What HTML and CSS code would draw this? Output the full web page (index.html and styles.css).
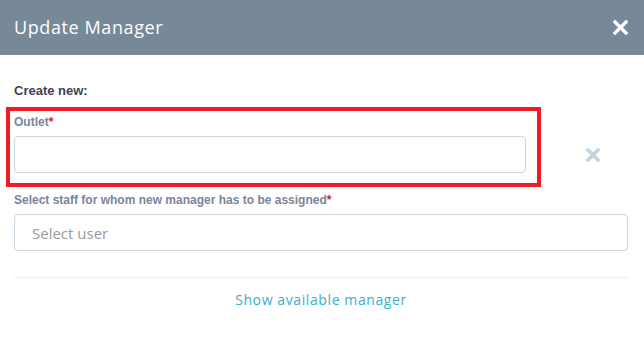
FILE: index.html
```html
<!DOCTYPE html>
<html lang="en">
<head>
  <meta charset="UTF-8" />
  <title>Update Manager</title>
  <link rel="stylesheet" href="styles.css">
</head>
<body>

  <div class="modal">
    <header class="modal-header">
      <h1>Update Manager</h1>
      <button class="close-btn" aria-label="Close">
        <svg width="15" height="15" viewBox="0 0 15 15"><path d="M2 2 L13 13 M13 2 L2 13" stroke="#fff" stroke-width="3.4" stroke-linecap="square"/></svg>
      </button>
    </header>

    <div class="modal-body">
      <h2 class="section-title">Create new:</h2>

      <div class="outlet-row">
        <div class="field">
          <label for="outlet">Outlet<span class="req">*</span></label>
          <input type="text" id="outlet">
        </div>
        <button class="remove-btn" aria-label="Remove">
          <svg width="16" height="16" viewBox="0 0 16 16"><path d="M3 3 L13 13 M13 3 L3 13" stroke="#c5d3da" stroke-width="3.6" stroke-linecap="square"/></svg>
        </button>
        <!-- highlight box from the annotated screenshot -->
        <div class="highlight"></div>
      </div>

      <div class="field staff-field">
        <label for="staff">Select staff for whom new manager has to be assigned<span class="req">*</span></label>
        <input type="text" id="staff" placeholder="Select user">
      </div>

      <hr class="divider">

      <a href="#" class="show-link">Show available manager</a>
    </div>
  </div>

</body>
</html>
```

FILE: styles.css
```css
* {
  box-sizing: border-box;
  margin: 0;
  padding: 0;
}

body {
  font-family: 'Open Sans', sans-serif;
  background: #fff;
  width: 644px;
  height: 338px;
  overflow: hidden;
}

.modal-header {
  height: 55px;
  background-color: #778899;
  display: flex;
  align-items: center;
  justify-content: space-between;
  padding: 0 16px 0 14px;
}

.modal-header h1 {
  font-size: 18px;
  font-weight: 400;
  color: #fff;
  letter-spacing: 0.6px;
  margin-top: -1px;
}

.close-btn, .remove-btn {
  background: none;
  border: none;
  display: flex;
  cursor: pointer;
}

.modal-body {
  padding: 28px 16px 0 14px;
}

.section-title {
  font-family: 'Liberation Sans', Arial, sans-serif;
  font-size: 13px;
  font-weight: 700;
  color: #3d4453;
  line-height: 16px;
}

.outlet-row {
  position: relative;
  display: grid;
  grid-template-columns: 512px 1fr;
  align-items: end;
  margin-top: 16px;
}

.remove-btn {
  margin: 0 0 10px 59px;
}

.highlight {
  position: absolute;
  left: -8px;
  top: -8px;
  width: 535px;
  height: 80px;
  border: 4px solid #ee1c25;
  pointer-events: none;
}

label {
  display: block;
  font-family: 'Liberation Sans', Arial, sans-serif;
  font-size: 12px;
  font-weight: 700;
  color: #7a8599;
  line-height: 14px;
  margin-bottom: 7px;
}

.req {
  color: #e8112d;
}

input {
  display: block;
  width: 100%;
  height: 37px;
  border: 1px solid #c8d6e0;
  border-radius: 4px;
  padding: 0 17px;
  font-family: 'Open Sans', sans-serif;
  font-size: 15px;
  color: #333;
  outline: none;
}

input::placeholder {
  color: #9a9a9a;
}

.staff-field {
  margin-top: 20px;
}

.divider {
  border: none;
  border-top: 1px solid #e9eff3;
  margin-top: 26px;
}

.show-link {
  display: block;
  text-align: center;
  margin-top: 12px;
  font-size: 14px;
  letter-spacing: 0.6px;
  color: #3aafd2;
  text-decoration: none;
}
```
